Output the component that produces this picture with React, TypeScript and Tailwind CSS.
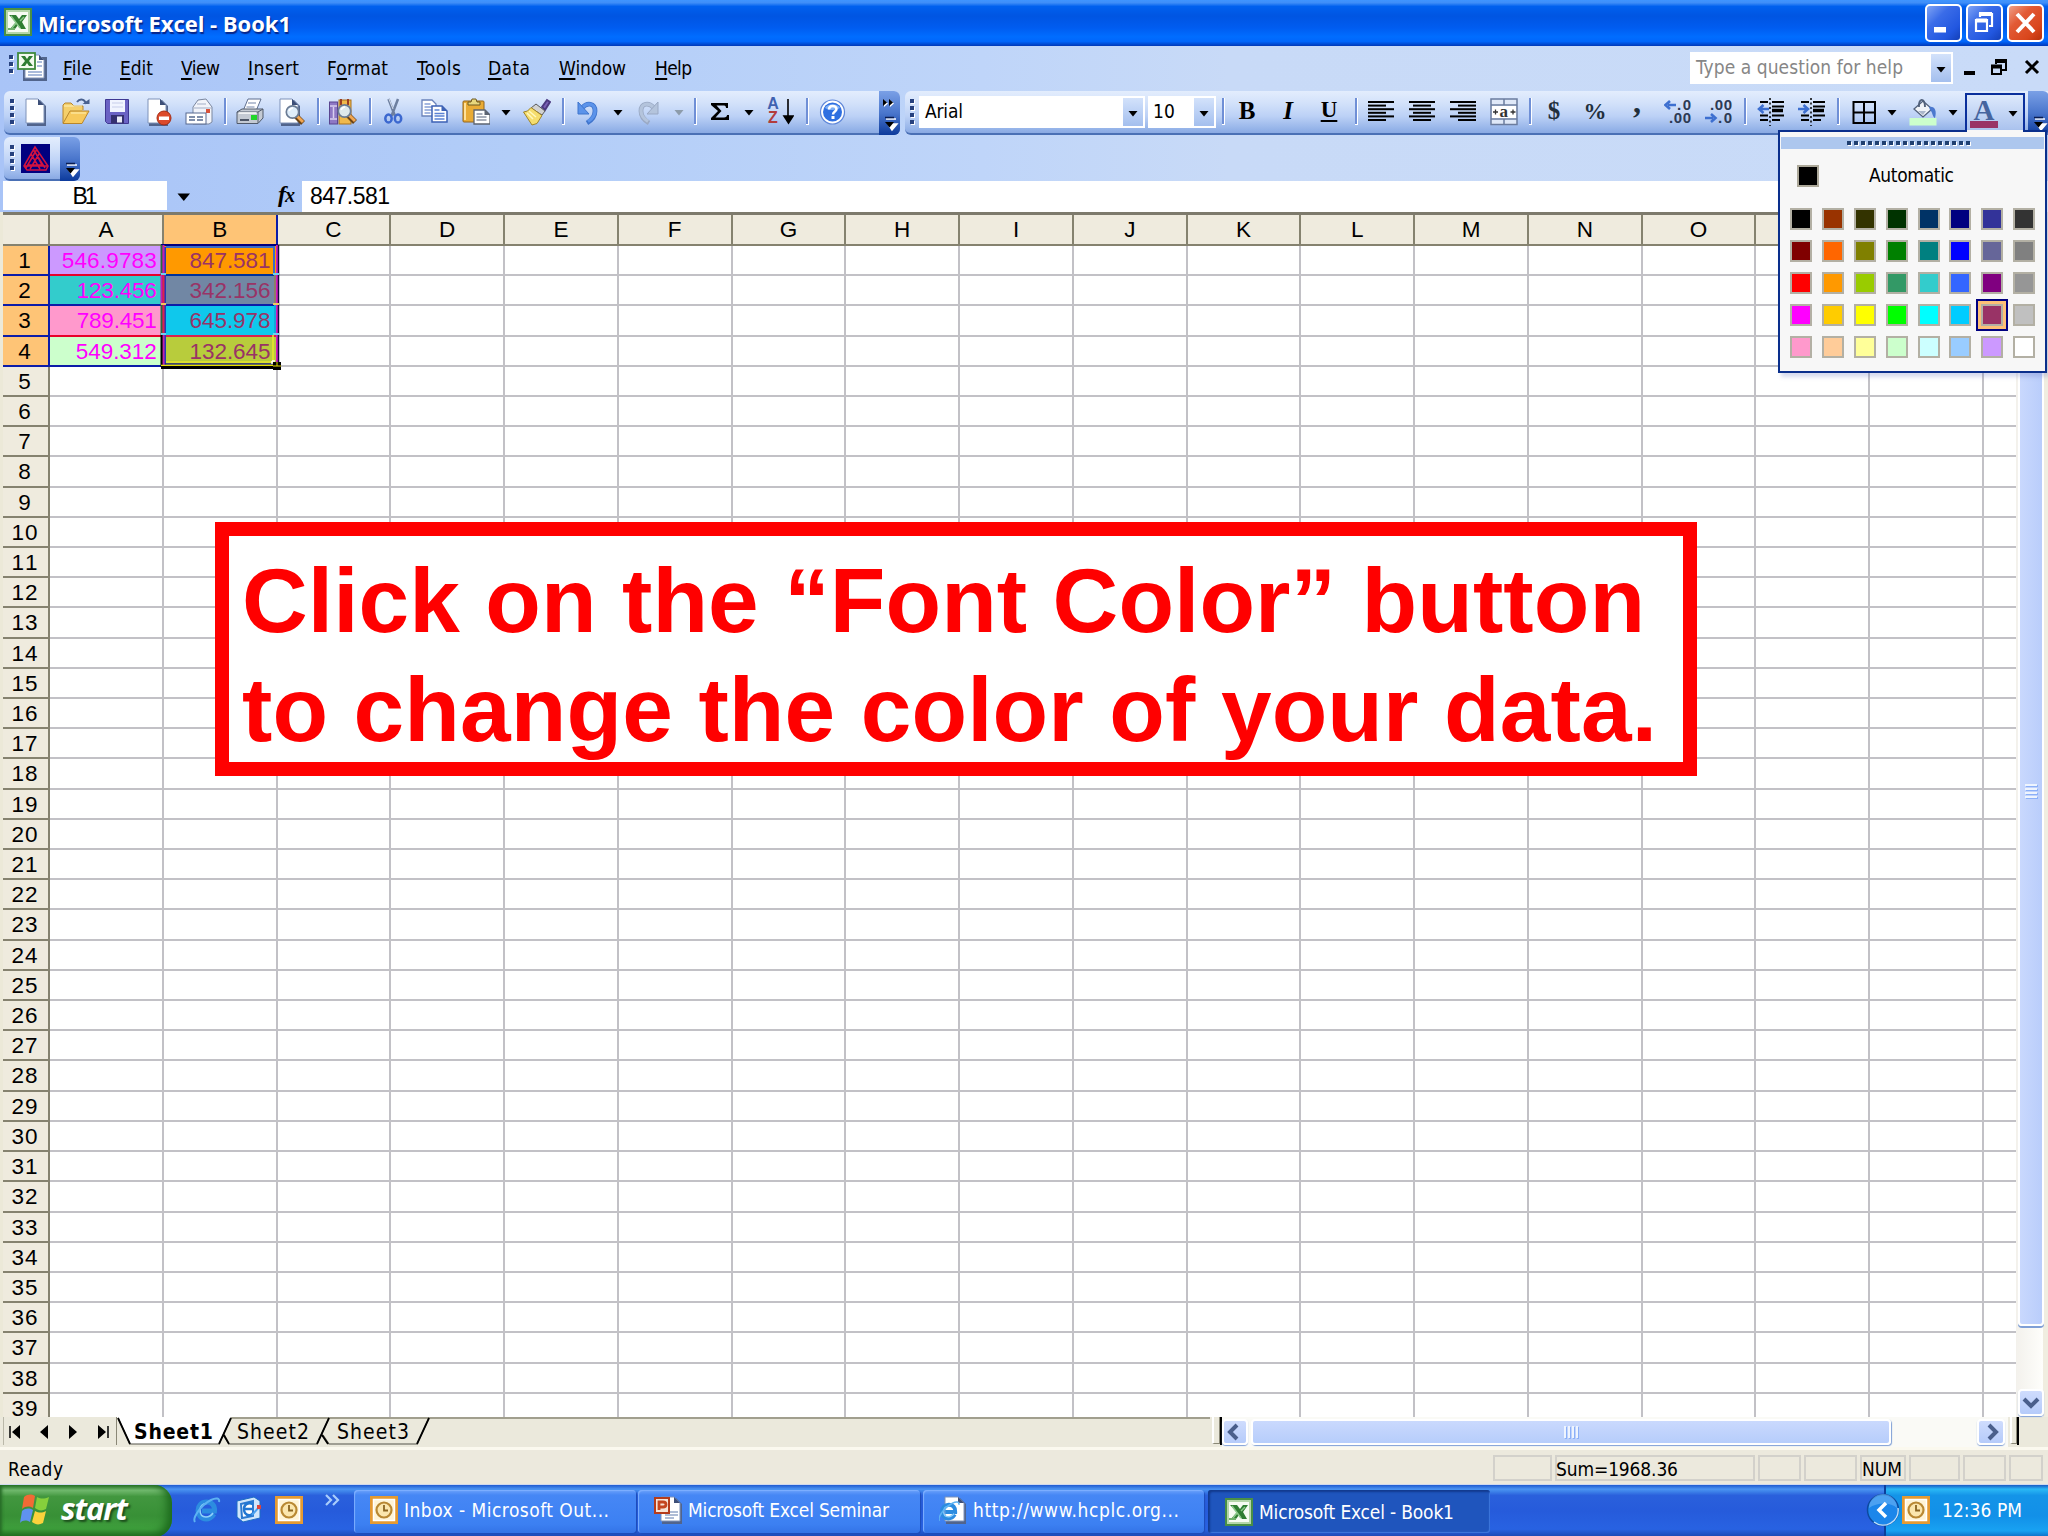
import { useLayoutEffect, useRef, useState } from "react";
import type { ReactNode } from "react";

const ui = "font-['DejaVu_Sans_Condensed','DejaVu_Sans',sans-serif] [font-stretch:condensed]";

// text with its tracking set so that it fills w pixels
const Fit = ({ w, className = "", children }: { w: number; className?: string; children: ReactNode }) => {
  const ref = useRef<HTMLSpanElement>(null);
  const [spacing, setSpacing] = useState(0);

  useLayoutEffect(() => {
    const el = ref.current;
    if (!el) return;
    const count = Math.max(1, (el.textContent || "").length - 1);
    setSpacing((w - el.getBoundingClientRect().width) / count);
  }, [w]);

  return (
    <span className={`block shrink-0 whitespace-pre ${className}`} style={{ width: w }}>
      <span ref={ref} style={{ letterSpacing: spacing }}>{children}</span>
    </span>
  );
};

const Svg = ({ className = "", children }: { className?: string; children: ReactNode }) => (
  <svg viewBox="0 0 28 28" className={`block w-7 h-7 shrink-0 ${className}`}>{children}</svg>
);

const Sep = ({ className = "" }: { className?: string }) => (
  <div className={`w-[3px] h-[27px] shrink-0 bg-[#6f8fd6] border-r border-b border-white ${className}`} />
);

const Arrow = ({ className = "", color = "#000" }: { className?: string; color?: string }) => (
  <svg viewBox="0 0 10 28" className={`block w-[10px] h-7 shrink-0 ${className}`}>
    <path d="M0.5 12h9L5 17.5z" fill={color} />
  </svg>
);

const Grip = ({ className = "", n = 4 }: { className?: string; n?: number }) => (
  <div className={`flex flex-col gap-[3px] w-[5px] shrink-0 ${className}`}>
    {Array.from({ length: n }, (_, i) => (
      <div key={i} className="w-1 h-1 bg-[#27417e] shadow-[1px_1px_0_#fff]" />
    ))}
  </div>
);

const ExcelIcon = ({ className = "" }: { className?: string }) => (
  <Svg className={className}>
    <rect x="1" y="1" width="26" height="26" fill="#f6fbf2" stroke="#4a8f45" strokeWidth="2" />
    <rect x="3" y="3" width="22" height="22" fill="none" stroke="#b5d6aa" strokeWidth="2" />
    <path d="M5 7h7l3 4 3-4h5l-5 7 4 7h-5l-3-4-3 4H6l6-7z" fill="#2f7d32" />
    <path d="M7 8l9 12M20 9l-4 4M8 20l4-5" stroke="#8cc98a" strokeWidth="1.5" />
    <path d="M4 21h7" stroke="#6fb06a" strokeWidth="2" />
  </Svg>
);

const Page = ({ x = 5, y = 1, w = 19, h = 25 }) => (
  <g>
    <path d={`M${x + 1} ${y + 1}h${w - 6}l6 6v${h - 5}h-${w}z`} fill="#51648c" />
    <path d={`M${x} ${y}h${w - 7}l6 6v${h - 7}h-${w - 1}z`} fill="#fff" stroke="#7e92b8" strokeWidth="1" />
    <path d={`M${x + w - 7} ${y}v6h6z`} fill="#3d4f78" />
  </g>
);

const NewIcon = () => <Svg className="ml-[6px]"><Page /></Svg>;

const OpenIcon = () => (
  <Svg className="ml-[13px]">
    <path d="M1 25V7l2-2h6l3 3h9v4" fill="#f4cf6b" stroke="#b8862c" />
    <path d="M1 25.500L8 13h19l-7 12.500z" fill="#f7c95c" stroke="#b8862c" />
    <path d="M2 8h18M9 15h15" stroke="#fff2b8" />
    <path d="M15 4c3-4 8-3 9 2" fill="none" stroke="#49618f" strokeWidth="2" />
    <path d="M20.500 6h7v-5z" fill="#49618f" />
  </Svg>
);

const SaveIcon = () => (
  <Svg className="ml-[14px]">
    <path d="M1.500 1.500h23v24h-21l-2-2z" fill="#6a62c4" stroke="#3f3892" />
    <rect x="6" y="2" width="15" height="12" fill="#f1f4ff" />
    <path d="M8 5h11M8 9h11" stroke="#c7cdea" />
    <rect x="7" y="17" width="13" height="8.500" fill="#34306f" />
    <rect x="13" y="18.500" width="5" height="6" fill="#e9ebf8" />
  </Svg>
);

const PermissionIcon = () => (
  <Svg className="ml-[13px]">
    <Page x={3} />
    <circle cx="19" cy="20" r="7" fill="#dc4a2b" stroke="#a62c14" />
    <rect x="14" y="18.500" width="10" height="3.500" fill="#fff" />
  </Svg>
);

const MailIcon = () => (
  <Svg className="ml-[12px]">
    <path d="M8 9l5-7 8-1 6 8v15l-3 2H8z" fill="#f2f4fa" stroke="#7b879f" />
    <path d="M9 10h18M12 6h9" stroke="#a3aec6" />
    <rect x="21" y="11" width="4" height="4" fill="#d9523a" />
    <rect x="1" y="15" width="20" height="11" fill="#fff" stroke="#56698f" />
    <path d="M4 19h6M4 22h6M12 19h6M12 22h6" stroke="#56698f" strokeWidth="1.500" />
  </Svg>
);

const PrintIcon = () => (
  <Svg className="ml-[9px]">
    <path d="M7 13L12 1h13l-5 12z" fill="#fff" stroke="#5f6f8f" />
    <path d="M12 5h8M10.500 9h8" stroke="#a3aec6" strokeWidth="1.500" />
    <path d="M1 14l5-3h21v9l-5 5.500H1z" fill="#c4cad3" stroke="#505a6b" />
    <path d="M1 14h21l5-3M22 14v11" fill="none" stroke="#505a6b" />
    <path d="M2.500 15h18" stroke="#fff" strokeWidth="1.500" />
    <rect x="15" y="17" width="6" height="5" fill="#22d62a" />
    <path d="M4 22h9" stroke="#4c5566" strokeWidth="2" />
  </Svg>
);

const Lens = () => (
  <g>
    <path d="M18 18l7 7" stroke="#6b4416" strokeWidth="5.500" />
    <path d="M19 18l6 6" stroke="#f0a652" strokeWidth="3" />
    <circle cx="14.500" cy="14" r="6.200" fill="#dcedfb" fillOpacity=".92" stroke="#6b7c94" strokeWidth="1.700" />
    <path d="M11 13c1-2 2-3 4-3" stroke="#fff" strokeWidth="1.500" fill="none" />
  </g>
);

const PreviewIcon = () => <Svg className="ml-[14px]"><Page x={2} /><Lens /></Svg>;

const ResearchIcon = () => (
  <Svg className="ml-[9px]">
    <rect x="0.500" y="4" width="8" height="22" fill="#8e78c4" stroke="#5a4590" />
    <path d="M1 8h7M1 21h7M4.500 9v11" stroke="#d9cff0" strokeWidth="1.500" />
    <rect x="10" y="2" width="12" height="24" fill="#f0b94c" stroke="#a8701c" />
    <path d="M12 1v6M19 1v6" stroke="#9b3d22" strokeWidth="2" />
    <g transform="translate(1 -1)"><Lens /></g>
  </Svg>
);

const CutIcon = () => (
  <Svg className="ml-[7px]">
    <path d="M9.500 1l6.500 17M19 1l-6.500 17" stroke="#6d7f9f" strokeWidth="2.500" fill="none" />
    <path d="M10 1l4 10" stroke="#d6deec" />
    <ellipse cx="9.500" cy="20.500" rx="3.200" ry="4" fill="none" stroke="#3c68cf" strokeWidth="2.500" />
    <ellipse cx="19" cy="20.500" rx="3.200" ry="4" fill="none" stroke="#3c68cf" strokeWidth="2.500" />
  </Svg>
);

const CopyIcon = () => (
  <Svg className="ml-[14px]">
    <path d="M1 2h10l4 4v12H1z" fill="#fff" stroke="#6a83bb" strokeWidth="1.300" />
    <path d="M3.500 6h6M3.500 9h8M3.500 12h8M3.500 15h6" stroke="#86a0d6" strokeWidth="1.300" />
    <path d="M11 8h10l5 5v11H11z" fill="#fff" stroke="#3d62b5" strokeWidth="1.500" />
    <path d="M20.500 8v5H26z" fill="#3d62b5" />
    <path d="M13.500 12h5M13.500 15.500h10M13.500 18h10M13.500 21h10" stroke="#5b82d3" strokeWidth="1.300" />
  </Svg>
);

const PasteIcon = () => (
  <Svg className="ml-[13px]">
    <rect x="1" y="3" width="21" height="21" rx="1" fill="#e9ab35" stroke="#94651a" />
    <path d="M3 5v17" stroke="#ffe19a" strokeWidth="2" />
    <path d="M6 7V4h3l1-3h4l1 3h3v3z" fill="#e8d67c" stroke="#6e5a22" />
    <path d="M12 12h11l5 5v9H12z" fill="#fff" stroke="#5c6472" strokeWidth="1.300" />
    <path d="M22.500 12v5H28z" fill="#5c6472" />
    <path d="M14.500 16h6M14.500 19h10M14.500 22h10" stroke="#8c94a4" strokeWidth="1.300" />
  </Svg>
);

const PainterIcon = () => (
  <Svg className="ml-[12px]">
    <path d="M19 9l5-7 3 2-5 8z" fill="#7860b4" stroke="#4c3a80" strokeWidth="2" />
    <path d="M13 6l9 7-3 4-11-7z" fill="#d2d2d2" stroke="#5a5a5a" />
    <path d="M8 9.500l11 8-5 8-5 1.500L0.500 14l4-1z" fill="#f5dd6e" stroke="#a08427" />
    <path d="M6 13l7 6M4 15l6 6" stroke="#fff7bf" strokeWidth="1.500" />
  </Svg>
);

const Curl = ({ color, dark }: { color: string; dark: string }) => (
  <g>
    <path d="M8 10c5-6 13-5 13 3 0 5-3 9-8 12" fill="none" stroke={dark} strokeWidth="4.800" />
    <path d="M8 10c5-6 13-5 13 3 0 5-3 8-7 10.500" fill="none" stroke={color} strokeWidth="3.200" />
    <path d="M4 4v12h11z" fill={color} stroke={dark} />
  </g>
);

const UndoIcon = () => <Svg className="ml-[9px]"><Curl color="#5b93ea" dark="#3f74cc" /></Svg>;
const RedoIcon = () => (
  <Svg className="ml-[11px]"><g transform="translate(28 0) scale(-1 1)"><Curl color="#b4c4dc" dark="#9aa9c4" /></g></Svg>
);

const SigmaIcon = () => (
  <Svg className="ml-[9px]">
    <path d="M5 5h17v5h-2c0-2-1-2.500-3-2.500h-6.500l5 5.500-6 6.500H18c2 0 3-1 3-2.500h2V22H5v-2l7-7-7-6z" fill="#000" />
  </Svg>
);

const SortIcon = () => (
  <div className="ml-[12px] w-7 h-7 shrink-0 flex">
    <div className="w-[14px] flex flex-col items-center font-['Liberation_Sans'] font-bold text-[16px] leading-[14px] -mt-px">
      <span className="text-[#3f62b0]">A</span>
      <span className="text-[#b23c3c]">Z</span>
    </div>
    <svg viewBox="0 0 14 28" className="block w-[14px] h-7"><path d="M8 1v20M4 18h9l-4.500 7z" stroke="#000" strokeWidth="1.600" /></svg>
  </div>
);

const HelpIcon = () => (
  <Svg className="ml-[10px]">
    <circle cx="13.500" cy="14" r="12" fill="#fff" stroke="#5e86d8" strokeWidth="1.200" />
    <circle cx="13.500" cy="14" r="9.500" fill="#2f6fe0" />
    <path d="M6 10c2-5 13-5 15 0-3 2-11 3-15 0z" fill="#7fb0f5" />
    <path d="M10 11.500c0-5 7.500-4.500 7.500-.5 0 2.500-3.500 2.500-3.500 5.500" fill="none" stroke="#fff" strokeWidth="2.500" />
    <rect x="12.500" y="18" width="3" height="3" fill="#fff" />
  </Svg>
);

const AlignIcon = ({ kind }: { kind: "left" | "center" | "right" }) => (
  <Svg className={kind === "left" ? "ml-[9px]" : "ml-[13px]"}>
    {[26, 18, 26, 18, 26, 18].map((w, i) => {
      const x = kind === "left" ? 1 : kind === "center" ? 14 - w / 2 : 27 - w;
      return <rect key={i} x={x} y={3 + i * 3.6} width={w} height="2" fill="#000" />;
    })}
  </Svg>
);

const MergeIcon = () => (
  <Svg className="ml-[13px]">
    <rect x="1" y="1" width="26" height="25.500" fill="#dfe8f8" stroke="#6b7c9e" strokeWidth="1.500" />
    <path d="M1 7h26M1 21h26M14 1v6M14 21v5" stroke="#6b7c9e" strokeWidth="1.500" />
    <rect x="2" y="8" width="24" height="12" fill="#fff" />
    <path d="M3 14h5M5.500 11.500v5M20.500 14h5M23 11.500v5" stroke="#333" strokeWidth="1.300" />
    <text x="9.500" y="19" fontFamily="Liberation Serif" fontWeight="bold" fontSize="17" fill="#333">a</text>
  </Svg>
);

const DecimalIcon = ({ more, className }: { more?: boolean; className: string }) => (
  <Svg className={className}>
    <g fontFamily="Liberation Sans" fontSize="15" fontWeight="bold" fill="#2c3a54">
      <text x={more ? 13 : 5} y="12" textLength={more ? 14 : 22}>{more ? ".0" : ".00"}</text>
      <text x={more ? 5 : 13} y="24.500" textLength={more ? 22 : 14}>{more ? ".00" : ".0"}</text>
    </g>
    {more ? (
      <path d="M12 7H4M6 3L1.500 7 6 11" fill="none" stroke="#3d6fd0" strokeWidth="2.600" />
    ) : (
      <path d="M0 20h8M6 16l4.500 4L6 24" fill="none" stroke="#3d6fd0" strokeWidth="2.600" />
    )}
  </Svg>
);

const IndentIcon = ({ out, className }: { out?: boolean; className: string }) => (
  <Svg className={className}>
    <path d="M3 4h8M15 4h12M15 8.500h12M15 13h8M3 17.500h8M15 17.500h12M3 22h8M15 22h8" stroke="#000" strokeWidth="2.200" />
    <path d="M15 12.500h11" stroke="#000" strokeWidth="3.500" />
    <path d="M13 0v28" stroke="#000" strokeWidth="1.500" strokeDasharray="2 2.500" />
    {out ? (
      <path d="M12 11H3M6.500 7L2 11l4.500 4" fill="none" stroke="#3d6fd0" strokeWidth="2.500" />
    ) : (
      <path d="M0 11h9M5.500 7l4.500 4-4.500 4" fill="none" stroke="#3d6fd0" strokeWidth="2.500" />
    )}
  </Svg>
);

const BordersIcon = () => (
  <Svg className="ml-[10px]">
    <path d="M3.500 4h21.500v21H3.500zM14 4v21M3.500 14.500h21.500" fill="none" stroke="#000" strokeWidth="2" />
  </Svg>
);

const FillIcon = () => (
  <Svg className="ml-[12px]">
    <path d="M5 11l9-8 9 8-9 8z" fill="#f0f3f8" stroke="#51607a" strokeWidth="1.300" />
    <path d="M10 9c-1-9 6-10 6 0" fill="none" stroke="#51607a" strokeWidth="1.800" />
    <path d="M9 13h8l-3 4z" fill="#aab6ca" />
    <path d="M20 9c6-1 8 4 6 11-3-1-2-6-5-8z" fill="#4b78ce" />
    <rect x="0.500" y="20" width="27" height="7.500" fill="#ccffcc" />
  </Svg>
);

const Glyph = ({ className, children }: { className: string; children: ReactNode }) => (
  <div className={`w-7 h-7 shrink-0 text-center font-['Liberation_Serif',serif] font-bold ${className}`}>{children}</div>
);

const Combo = ({ className, children }: { className: string; children: ReactNode }) => (
  <div className={`bg-white h-8 shrink-0 flex items-center p-[2px] ${className}`}>
    {children}
    <div className="ml-auto w-5 h-7 bg-linear-to-b from-[#d3e2fb] to-[#a4bfee] flex justify-center items-center">
      <Arrow className="mt-px" />
    </div>
  </div>
);

const TitleBar = () => (
  <div className="h-[46px] flex items-center pl-1 pr-1 bg-[linear-gradient(180deg,#3f95ff_0%,#3f8ef8_6%,#0060ee_14%,#0055e2_35%,#005cf0_60%,#006dff_80%,#0066fb_90%,#0038b8_100%)]">
    <ExcelIcon className="mt-[-3px]" />
    <Fit w={253} className="ml-[6px] font-['Open_Sans',sans-serif] font-bold text-[22px] leading-[40px] text-white [text-shadow:1px_2px_1px_#06268a]">
      Microsoft Excel - Book1
    </Fit>
    <div className="ml-auto flex gap-[4px]">
      <WinButton>
        <rect x="9" y="23" width="12" height="5.500" fill="#fff" />
      </WinButton>
      <WinButton>
        <path d="M14 13v-3h12v12h-3M10 16h11v11H10z" fill="none" stroke="#fff" strokeWidth="2.200" />
        <path d="M13 10h13M10 16.500h11" stroke="#fff" strokeWidth="4" />
      </WinButton>
      <WinButton red>
        <path d="M10 10l17 18M27 10L10 28" stroke="#fff" strokeWidth="4" />
      </WinButton>
    </div>
  </div>
);

const WinButton = ({ red, children }: { red?: boolean; children: ReactNode }) => (
  <div className={`w-[37px] h-[38px] rounded-[5px] border-2 border-white overflow-hidden ${red
    ? "bg-[linear-gradient(135deg,#f0a088_0%,#e25a35_35%,#d9461c_75%,#b8300a_100%)]"
    : "bg-[linear-gradient(135deg,#7fa4f5_0%,#3a6ce8_35%,#2257e0_75%,#1440b8_100%)]"}`}>
    <svg viewBox="0 0 37 38" className="block w-[37px] h-[38px] -ml-[2px] -mt-[2px]">{children}</svg>
  </div>
);

const menus = [
  { pre: "", key: "F", post: "ile", w: 29, ml: "ml-[14px]" },
  { pre: "", key: "E", post: "dit", w: 33, ml: "ml-[28px]" },
  { pre: "", key: "V", post: "iew", w: 39, ml: "ml-[28px]" },
  { pre: "", key: "I", post: "nsert", w: 51, ml: "ml-[28px]" },
  { pre: "F", key: "o", post: "rmat", w: 61, ml: "ml-[28px]" },
  { pre: "", key: "T", post: "ools", w: 44, ml: "ml-[29px]" },
  { pre: "", key: "D", post: "ata", w: 42, ml: "ml-[27px]" },
  { pre: "", key: "W", post: "indow", w: 67, ml: "ml-[29px]" },
  { pre: "", key: "H", post: "elp", w: 37, ml: "ml-[29px]" },
];

const MenuBar = () => (
  <div className={`h-[45px] flex items-start pl-[9px] text-black text-[19px] ${ui}`}>
    <Grip className="mt-[9px]" n={3} />
    <svg viewBox="0 0 32 30" className="block w-8 h-[30px] mt-[6px] ml-[3px]">
      <path d="M10 5h20v24H6V12z" fill="#51648c" />
      <path d="M8 3h14l5 5v18H8z" fill="#fff" stroke="#8294b8" />
      <path d="M20 10h5M20 14h5M11 20h14M11 23h14" stroke="#8fa5cf" strokeWidth="1.500" />
      <path d="M22 3v5h5z" fill="#3d4f78" />
      <rect x="1" y="1" width="17" height="16" fill="#f3faef" stroke="#3f8a3c" strokeWidth="1.800" />
      <path d="M4 4h4l2 3 2-3h4l-4 5 4 5h-4l-2-3-2 3H4l4-5z" fill="#2f7d32" />
    </svg>
    {menus.map((m) => (
      <Fit key={m.key + m.post} w={m.w} className={`mt-[8px] leading-[28px] ${m.ml}`}>
        {m.pre}<span className="underline decoration-2 underline-offset-[3px]">{m.key}</span>{m.post}
      </Fit>
    ))}
    <Combo className="ml-auto mt-[6px] w-[263px]">
      <Fit w={207} className="ml-[4px] text-[#868686] leading-[26px] pb-[3px]">Type a question for help</Fit>
    </Combo>
    <svg viewBox="0 0 84 30" className="block w-[84px] h-[30px] mt-[7px] ml-[7px] mr-1">
      <rect x="4" y="18" width="11" height="4" fill="#000" />
      <path d="M36 11V8h10v9h-4M32 13h9v8h-9z" fill="none" stroke="#000" strokeWidth="2" />
      <path d="M35 8h12M31 13.500h11" stroke="#000" strokeWidth="4" />
      <path d="M66 8l12 12M78 8L66 20" stroke="#000" strokeWidth="3" />
    </svg>
  </div>
);

const bar = "bg-[linear-gradient(180deg,#e3edfd_0%,#d2e1fa_30%,#bcd1f6_60%,#93b2e8_92%,#8aa9e2_100%)] border-b-2 border-[#4a70b5]";
const endCap = "bg-[linear-gradient(180deg,#7aa0e6_0%,#4a76cc_50%,#0c3a9c_100%)] rounded-r-[6px]";

const CapArrow = ({ chevrons }: { chevrons?: boolean }) => (
  <svg viewBox="0 0 21 44" className="block w-[21px] h-11">
    {chevrons && (
      <>
        <path d="M5 9l4 3.500-4 3.500zM11 9l4 3.500-4 3.500z" fill="#fff" />
        <path d="M4 8l4 3.500L4 15zM10 8l4 3.500-4 3.500z" fill="#000" />
      </>
    )}
    <path d="M7 28h10M9 33h9l-5 6z" stroke="#fff" strokeWidth="1.500" fill="#fff" />
    <path d="M6 26.500h9" stroke="#0a1c50" strokeWidth="1.500" />
    <path d="M6 31h9l-4.500 5.500z" fill="#000" />
  </svg>
);

const Toolbars = () => (
  <div className="flex h-11 pl-1 gap-[5px] overflow-hidden">
    <div className={`w-[896px] shrink-0 h-11 flex items-start rounded-l-[6px] rounded-r-[6px] ${bar}`}>
      <Grip className="ml-[6px] mt-[8px]" />
      <div className="flex items-start pt-[7px]">
        <NewIcon />
        <OpenIcon />
        <SaveIcon />
        <PermissionIcon />
        <MailIcon />
        <Sep className="ml-[11px]" />
        <PrintIcon />
        <PreviewIcon />
        <Sep className="ml-[11px]" />
        <ResearchIcon />
        <Sep className="ml-[12px]" />
        <CutIcon />
        <CopyIcon />
        <PasteIcon />
        <Arrow className="ml-[11px]" />
        <PainterIcon />
        <Sep className="ml-[11px]" />
        <UndoIcon />
        <Arrow className="ml-[11px]" />
        <RedoIcon />
        <Arrow className="ml-[12px]" color="#8d9cab" />
        <Sep className="ml-[10px]" />
        <SigmaIcon />
        <Arrow className="ml-[10px]" />
        <SortIcon />
        <Sep className="ml-[12px]" />
        <HelpIcon />
      </div>
      <div className={`ml-auto w-[21px] h-11 ${endCap}`}><CapArrow chevrons /></div>
    </div>
    <div className={`w-[1143px] shrink-0 h-11 flex items-start rounded-l-[6px] ${bar}`}>
      <Grip className="ml-[5px] mt-[8px]" />
      <Combo className="ml-[4px] mt-[5px] w-[226px]">
        <Fit w={38} className={`ml-[4px] text-[19px] leading-[24px] pb-[3px] ${ui}`}>Arial</Fit>
      </Combo>
      <Combo className="ml-[3px] mt-[5px] w-[68px]">
        <Fit w={22} className={`ml-[3px] text-[19px] leading-[24px] pb-[3px] ${ui}`}>10</Fit>
      </Combo>
      <div className="flex items-start pt-[7px]">
        <Sep className="ml-[6px]" />
        <Glyph className="ml-[8px] text-[25px] leading-[26px]">B</Glyph>
        <Glyph className="ml-[13px] text-[25px] leading-[26px] italic">I</Glyph>
        <Glyph className="ml-[13px] text-[23px] leading-[24px] underline decoration-2 underline-offset-[3px]">U</Glyph>
        <Sep className="ml-[12px]" />
        <AlignIcon kind="left" />
        <AlignIcon kind="center" />
        <AlignIcon kind="right" />
        <MergeIcon />
        <Sep className="ml-[11px]" />
        <Glyph className="ml-[8px] text-[25px] leading-[26px] text-[#222f3c]">$</Glyph>
        <Glyph className="ml-[13px] text-[23px] leading-[28px] text-[#222f3c]">%</Glyph>
        <Glyph className="ml-[14px] text-[32px] leading-[8px] text-[#222f3c]">,</Glyph>
        <DecimalIcon more className="ml-[13px]" />
        <DecimalIcon className="ml-[13px]" />
        <Sep className="ml-[11px]" />
        <IndentIcon out className="ml-[10px]" />
        <IndentIcon className="ml-[13px]" />
        <Sep className="ml-[11px]" />
        <BordersIcon />
        <Arrow className="ml-[9px]" />
        <FillIcon />
        <Arrow className="ml-[11px]" />
      </div>
      <div className="ml-[7px] mt-[2px] w-[60px] h-[42px] shrink-0 flex items-start pl-[3px] pt-[3px] border-2 border-b-0 border-[#0a2f9c] bg-[linear-gradient(180deg,#dde9fc,#a3bdec)]">
        <div className="w-7 h-[30px] flex flex-col items-center justify-end">
          <span className="font-['Liberation_Serif',serif] font-bold text-[29px] leading-[22px] text-[#46659f]">A</span>
          <div className="w-7 h-[7px] bg-[#993366]" />
        </div>
        <Arrow className="ml-[10px] mt-px" />
      </div>
      <div className={`ml-[3px] w-[21px] h-11 shrink-0 ${endCap}`}><CapArrow /></div>
    </div>
  </div>
);

const PdfToolbar = () => (
  <div className="h-[46px] pl-1 pt-[2px] flex">
    <div className={`w-14 h-11 flex items-start rounded-l-[6px] ${bar}`}>
      <Grip className="ml-[6px] mt-[8px]" />
      <svg viewBox="0 0 29 29" className="block w-[29px] h-[29px] ml-[6px] mt-[7px] shrink-0">
        <rect width="29" height="29" fill="#000080" />
        <path d="M14 3L3 22l3 4h19l2-4zM14 8l-7 13h14zM10 10l9 15M18 10L9 25M12 5l12 19M16 5L5 24M4 22h22" fill="none" stroke="#d3123f" strokeWidth="1.500" />
      </svg>
    </div>
    <div className={`w-5 h-11 ${endCap}`}><CapArrow /></div>
  </div>
);

const FormulaBar = () => (
  <div className="h-[31px] flex pl-[3px] font-['Liberation_Sans',sans-serif] text-[23px] leading-[30px]">
    <div className="w-[164px] h-[29px] bg-white flex justify-center"><Fit w={25}>B1</Fit></div>
    <svg viewBox="0 0 14 29" className="block w-[14px] h-[29px] ml-[10px]"><path d="M0.500 12.500h12.500l-6.200 7.500z" fill="#000" /></svg>
    <div className="ml-[84px] w-[27px] pl-[3px] font-['Liberation_Serif',serif] italic font-bold text-[24px] leading-[26px] tracking-[-1px]">
      f<span className="text-[20px]">x</span>
    </div>
    <div className="grow bg-white pl-[8px]"><Fit w={80}>847.581</Fit></div>
  </div>
);

const columns = ["A", "B", "C", "D", "E", "F", "G", "H", "I", "J", "K", "L", "M", "N", "O", "P", "Q", "R"];

const data = [
  { a: "546.9783", aw: 95, aBg: "bg-[#cc99ff]", aLine: "border-b-[#e8002c]", b: "847.581", bBg: "bg-[#ff9900]", bLine: "border-b-[#003399]" },
  { a: "123.456", aw: 80, aBg: "bg-[#33cccc]", aLine: "border-b-[#0c1ca8]", b: "342.156", bBg: "bg-[#7187a4]", bLine: "border-b-[#0c1ca8]" },
  { a: "789.451", aw: 80, aBg: "bg-[#ff99cc]", aLine: "border-b-[#e8002c]", b: "645.978", bBg: "bg-[#0fc8ec]", bLine: "border-b-[#d82050]" },
  { a: "549.312", aw: 81, aBg: "bg-[#ccffcc]", aLine: "border-b-[#0c1ca8]", b: "132.645", bBg: "bg-[#b8cc3c]", bLine: "border-b-[#000080]" },
];

const Sheet = () => (
  <div className="relative w-[2013px] h-[1205px] overflow-hidden bg-white border-t-[3px] border-[#7d7a6c] font-['Liberation_Sans',sans-serif] text-[22.5px]">
    <div className="flex h-[31px] w-[2140px]">
      <div className="w-[47px] border-r-2 border-b-2 border-[#85826f] bg-[#efebde]" />
      {columns.map((c) => (
        <div key={c} className={`w-[113.78px] border-r-2 border-b-2 text-center leading-[29px] ${c === "B" ? "bg-[#fec476] border-[#85826f] border-r-[#0c1ca8]" : "bg-[#efebde] border-[#85826f]"}`}>
          {c !== "P" && c !== "Q" && c !== "R" && c}
        </div>
      ))}
    </div>
    {Array.from({ length: 39 }, (_, r) => {
      const row = data[r];
      return (
        <div key={r} className="flex h-[30.21px] w-[2140px]">
          <div className={`w-[47px] shrink-0 border-r-2 border-b-2 flex justify-center leading-[29px] pr-[2px] ${row ? "bg-[#fec476] border-[#0c1ca8]" : "bg-[#efebde] border-[#85826f]"}`}>
            <Fit w={r < 9 ? 12.5 : 26}>{String(r + 1)}</Fit>
          </div>
          {columns.map((c) => {
            if (row && c === "A") {
              return (
                <div key={c} className={`w-[113.78px] shrink-0 flex justify-end pr-[5px] leading-[29px] text-[#ff00ff] border-b-2 border-r-2 border-r-[#6a3a70] ${row.aBg} ${row.aLine}`}>
                  <Fit w={row.aw}>{row.a}</Fit>
                </div>
              );
            }
            if (row && c === "B") {
              return (
                <div key={c} className={`w-[113.78px] shrink-0 flex justify-end pr-[5px] leading-[29px] text-[#993366] border-b-2 border-r-2 border-r-[#0c1ca8] ${row.bBg} ${row.bLine}`}>
                  <Fit w={81}>{row.b}</Fit>
                </div>
              );
            }
            return <div key={c} className="w-[113.78px] shrink-0 border-r-2 border-b-2 border-[#c2c1c6]" />;
          })}
        </div>
      );
    })}
    {/* selection frame */}
    <svg viewBox="0 0 124 128" className="absolute left-[157px] top-[28px] w-[124px] h-[128px]">
      <path d="M1 2h117" stroke="#000080" strokeWidth="2" />
      <path d="M5 4v118" stroke="#2438b4" strokeWidth="2" />
      <path d="M1.500 2v30M1.500 62v30" stroke="#2c6a40" strokeWidth="2" />
      <path d="M1.500 32v30M3.500 2v30M3.500 92v32" stroke="#c81cb0" strokeWidth="2" />
      <path d="M3.500 32v60" stroke="#e0204c" strokeWidth="2" />
      <path d="M1.500 92v32" stroke="#000" strokeWidth="2" />
      <path d="M6 4h108v28" fill="none" stroke="#3a6cc8" strokeWidth="2" />
      <path d="M115 32v30" stroke="#8a7f68" strokeWidth="2" />
      <path d="M115 62v30" stroke="#10a8d8" strokeWidth="2" />
      <path d="M117 2v120" stroke="#d01cc0" strokeWidth="2" />
      <path d="M118.500 2v120" stroke="#16083c" strokeWidth="1.500" />
      <path d="M6 119h107V92" fill="none" stroke="#e8e82c" strokeWidth="1.500" />
      <path d="M5 121h109" stroke="#1a1c80" strokeWidth="1.500" />
      <path d="M1 122.500h112" stroke="#e8e000" strokeWidth="1.500" />
      <path d="M1 124.500h112" stroke="#000" strokeWidth="3" />
      <path d="M1 31h5M113 31h6M1 91h5M113 91h6" stroke="#6cd0f0" strokeWidth="2" />
      <path d="M1 61h5M113 61h6" stroke="#f0c860" strokeWidth="2" />
      <path d="M112 118h3M112 118v3" stroke="#fff" strokeWidth="1.500" />
      <rect x="113" y="119" width="8" height="8" fill="#000" />
      <path d="M117 119v4M113 123h8" stroke="#e8e000" strokeWidth="1" />
    </svg>
    <div className="absolute left-[212px] top-[307px] w-[1482px] h-[254px] box-border border-[14px] border-[#ff0000] bg-white pl-[13px] pt-[10px] font-bold text-[91px] leading-[109px] text-[#ff0000]">
      <Fit w={1403}>Click on the “Font Color” button</Fit>
      <Fit w={1415}>to change the color of your data.</Fit>
    </div>
  </div>
);

const scrollBtn = "border-2 border-white rounded-[4px] bg-linear-to-b from-[#cfdcfd] to-[#b5cbfa] shadow-[0_1px_1px_#7f9fd6] shrink-0";

const Chevron = ({ d }: { d: string }) => (
  <svg viewBox="0 0 22 22" className="block w-[22px] h-[22px]"><path d={d} fill="none" stroke="#4a5f8c" strokeWidth="4" /></svg>
);

const VScroll = () => (
  <div className="w-[32px] h-[1205px] shrink-0 flex flex-col items-start pl-[2px] bg-linear-to-r from-[#f3f1ec] to-[#fefefb] border-r-[5px] border-[#f0ede0]">
    <div className="w-[26px] h-[1114px] border-2 border-white rounded-[4px] bg-linear-to-r from-[#c9d8fd] to-[#b9cdfb] shadow-[0_2px_0_#7f9fd6] flex flex-col gap-[2px] pt-[570px] items-center">
      {[0, 1, 2, 3].map((i) => <div key={i} className="w-3 h-[2px] bg-[#eef4fe] shadow-[1px_1px_0_#8cb0f8]" />)}
    </div>
    <div className={`mt-[63px] w-[26px] h-[27px] ${scrollBtn}`}>
      <Chevron d="M4 8l7 7 7-7" />
    </div>
  </div>
);

const SheetTabs = () => (
  <div className="h-[30px] flex pl-[3px] bg-[#ebe9dc]">
    <svg viewBox="0 0 114 30" className="block w-[114px] h-[30px]">
      <path d="M0 0v28M113.500 0v28" stroke="#8a8877" strokeWidth="1" />
      <path d="M7 9v12M105 9v12" stroke="#000" strokeWidth="1.500" />
      <path d="M17 8v14l-8-7zM45 8v14l-8-7zM66 8v14l8-7zM95 8v14l8-7z" fill="#000" />
    </svg>
    <div className={`relative w-[1093px] h-[30px] text-[21px] ${ui}`}>
      <svg viewBox="0 0 1093 30" className="absolute inset-0 w-[1093px] h-[30px]">
        <path d="M0 0h115l-12 27H13z" fill="#fff" />
        <path d="M114 1h979" stroke="#a19f8e" strokeWidth="2" />
        <path d="M1 1l12 26h89l12-26M106 18l6 9h88l12-26M206 18l6 9h88l12-26" fill="none" stroke="#55544a" strokeWidth="1.200" />
        <path d="M1 1l12 26M102 27l12-26M200 27l12-26M300 27l12-26M107 18l5 9M205 18l6 9" fill="none" stroke="#000" strokeWidth="1.800" />
      </svg>
      <div className="relative flex leading-[31px]">
        <Fit w={79} className="ml-[17px] font-bold">Sheet1</Fit>
        <Fit w={72} className="ml-[24px]">Sheet2</Fit>
        <Fit w={72} className="ml-[28px]">Sheet3</Fit>
      </div>
    </div>
    <div className="ml-[2px] w-[8px] h-[27px] bg-[#ebe9dc] border-l-2 border-l-white border-b border-r border-[#8a8877]" />
    <div className="w-[2px] h-[28px] bg-black" />
    <div className="w-[786px] h-[30px] flex pt-[2px] pr-[3px] bg-[#fafaf6]">
      <div className={`w-[26px] h-[26px] ${scrollBtn}`}><Chevron d="M13 4l-7 7 7 7" /></div>
      <div className="ml-[3px] w-[640px] h-[26px] border-2 border-white rounded-[4px] bg-linear-to-b from-[#cad9fd] to-[#b6cdfb] shadow-[1px_1px_1px_#7f9fd6] flex justify-center items-center gap-[2px]">
        {[0, 1, 2, 3].map((i) => <div key={i} className="w-[2px] h-3 bg-[#eef4fe] shadow-[1px_1px_0_#8cb0f8]" />)}
      </div>
      <div className={`ml-auto w-[28px] h-[26px] ${scrollBtn}`}><Chevron d="M10 4l7 7-7 7" /></div>
    </div>
    <div className="ml-[2px] w-[7px] h-[27px] bg-[#ebe9dc] border-l-2 border-l-white border-b border-r border-[#8a8877]" />
    <div className="w-[2px] h-[28px] bg-black" />
  </div>
);

const statusBox = "h-[26px] border-2 border-[#d3d1cb] shrink-0 leading-[25px]";

const StatusBar = () => (
  <div className={`h-[37px] flex items-end pb-[3px] pl-2 pr-[5px] bg-[#ece9dd] border-t-[3px] border-[#fbf9ef] text-[19px] ${ui}`}>
    <Fit w={55} className="leading-[24px]">Ready</Fit>
    <div className="ml-auto flex gap-[3px]">
      <div className={`w-[59px] ${statusBox}`} />
      <div className={`w-[200px] ${statusBox}`}><Fit w={122} className="-ml-px">Sum=1968.36</Fit></div>
      <div className={`w-[43px] ${statusBox}`} />
      <div className={`w-[53px] ${statusBox}`} />
      <div className={`w-[46px] ${statusBox}`}><Fit w={40}>NUM</Fit></div>
      <div className={`w-[51px] ${statusBox}`} />
      <div className={`w-[43px] ${statusBox}`} />
      <div className={`w-[34px] ${statusBox}`} />
    </div>
  </div>
);

const IeIcon = () => (
  <g>
    <path d="M21 18c-2 3-4 5-8 5-5 0-8-4-8-8.500S8.500 6 13.500 6 22 9 21.500 15H9" fill="none" stroke="#2c8ce0" strokeWidth="5" />
    <path d="M20 17c-2 3-4 4-7 4-4 0-6-3-6-7s3-6.500 6.500-6.500" fill="none" stroke="#8fd0fa" strokeWidth="1.500" />
    <path d="M2 26c-3-4 6-17 16-22 5-2.500 9-2 8 2" fill="none" stroke="#5db2f2" strokeWidth="2" />
  </g>
);

const OutlookIcon = ({ className = "" }: { className?: string }) => (
  <Svg className={className}>
    <rect x="1.500" y="1.500" width="25" height="25" fill="#fff4d6" stroke="#e59a32" strokeWidth="3" />
    <rect x="3.500" y="3.500" width="21" height="21" fill="none" stroke="#fff" strokeWidth="1.500" />
    <circle cx="14" cy="14" r="7.500" fill="#fbe6ad" stroke="#b98832" strokeWidth="2.200" />
    <path d="M14 9v5.500h4" fill="none" stroke="#8a6420" strokeWidth="1.800" />
  </Svg>
);

const taskText = `text-[19px] text-white leading-[40px] ${ui}`;
const task = "h-[43px] flex items-center pb-[2px] rounded-[4px] bg-[linear-gradient(180deg,#6ba1fb_0%,#4687f5_12%,#3c80f2_80%,#3373e6_100%)] shadow-[inset_1px_1px_1px_#7fb0ff,1px_1px_1px_#1d4cb8] shrink-0";

const Taskbar = () => (
  <div className="h-[53px] flex items-center border-t border-[#cfd9ee] bg-[linear-gradient(180deg,#1f5ad0_0%,#4b94f2_8%,#3f84ea_12%,#2a60dc_20%,#265bdb_50%,#2862e2_85%,#1b46b0_100%)]">
    <div className="w-[172px] h-[52px] shrink-0 flex items-center rounded-r-[18px] pl-[18px] pb-[3px] bg-[linear-gradient(180deg,#2c7a2c_0%,#73bb70_10%,#42973f_22%,#389036_60%,#3fa03d_85%,#2a7429_100%)] shadow-[inset_-5px_-2px_8px_#1d6a1d,inset_2px_0_3px_#2a6f2a]">
      <svg viewBox="0 0 34 34" className="block w-[34px] h-[34px] shrink-0">
        <path d="M6 4c4-3 7-3 11-1l-2 12c-4-2-7-2-11 1z" fill="#f26a35" />
        <path d="M19 4c4 2 7 2 12 0l-3 12c-4 2-7 2-11-1z" fill="#86cf3c" />
        <path d="M4 18c4-3 7-3 11-1l-3 12c-4-2-7-2-10 1z" fill="#5f92f0" />
        <path d="M17 18c4 2 7 2 11 0l-3 12c-4 2-7 2-11-1z" fill="#fbd23c" />
      </svg>
      <Fit w={67} className="ml-[9px] mb-[3px] font-['Open_Sans',sans-serif] italic font-bold text-[31px] leading-[36px] text-white [text-shadow:2px_2px_2px_#1c4f1c]">start</Fit>
    </div>
    <Svg className="ml-[21px] mb-[2px]"><IeIcon /></Svg>
    <Svg className="ml-[13px] mb-[2px]">
      <path d="M3 5l17-4 6 4v17l-17 4-6-5z" fill="#cfe6fb" stroke="#1d6cc4" />
      <path d="M7 8l12-3v15L8 22z" fill="#fff" stroke="#2c7ad0" strokeWidth="2" />
      <path d="M19 8c-7-3-11 3-8 9 3 4 7 2 8 0M11 13h7" fill="none" stroke="#2177d2" strokeWidth="2.500" />
      <path d="M18 19l8-9" stroke="#49a0ee" strokeWidth="2" />
      <rect x="23" y="9" width="4" height="4" fill="#e0443a" />
    </Svg>
    <OutlookIcon className="ml-[13px] mb-[2px]" />
    <svg viewBox="0 0 16 14" className="block w-4 h-[14px] ml-[22px] mb-[22px] shrink-0">
      <path d="M1 2l5 5-5 5M8 2l5 5-5 5" fill="none" stroke="#a9cdfb" strokeWidth="2.200" />
    </svg>
    <div className={`ml-[13px] w-[282px] pl-4 ${task}`}>
      <OutlookIcon />
      <Fit w={205} className={`ml-[6px] ${taskText}`}>Inbox - Microsoft Out...</Fit>
    </div>
    <div className={`ml-[2px] w-[282px] pl-4 ${task}`}>
      <Svg>
        <Page x={7} y={1} w={20} h={25} />
        <path d="M11 16h13M11 19h13M11 22h9" stroke="#94a6c8" strokeWidth="1.300" />
        <rect x="1" y="2" width="14" height="15" fill="#f7e3d6" stroke="#b53c1c" strokeWidth="2" />
        <path d="M5 14V6h4c4 0 4 5 0 5H6" fill="none" stroke="#c4451f" strokeWidth="2.800" />
      </Svg>
      <Fit w={201} className={`ml-[6px] ${taskText}`}>Microsoft Excel Seminar</Fit>
    </div>
    <div className={`ml-[3px] w-[281px] pl-4 ${task}`}>
      <Svg>
        <Page x={6} y={1} w={20} h={25} />
        <g transform="translate(-1 4) scale(.8)"><IeIcon /></g>
      </Svg>
      <Fit w={206} className={`ml-[6px] ${taskText}`}>http://www.hcplc.org...</Fit>
    </div>
    <div className="ml-[4px] w-[282px] h-[43px] pl-[17px] flex items-center rounded-[3px] bg-[#1f55bd] shadow-[inset_2px_2px_2px_#123a8e,inset_-1px_-1px_1px_#3e78dd] shrink-0">
      <ExcelIcon className="mt-px" />
      <Fit w={195} className={`ml-[6px] mt-px ${taskText}`}>Microsoft Excel - Book1</Fit>
    </div>
    <div className="ml-auto w-[164px] h-[52px] flex items-center border-l-2 border-[#0c3f9c] pb-[2px] bg-[linear-gradient(180deg,#1a5bc4_0%,#2ab8f5_8%,#1494e8_20%,#1290e8_60%,#18a2f2_88%,#0f6cc4_100%)]">
      <svg viewBox="0 0 34 34" className="block w-[34px] h-[34px] -ml-[20px] shrink-0">
        <circle cx="17" cy="17" r="15.500" fill="#1c86ea" stroke="#0c4aa0" strokeWidth="1.500" />
        <path d="M3 15a14 14 0 0 1 28 0c-6-6-20-6-28 0z" fill="#6cb4f5" fillOpacity=".6" />
        <path d="M32 15a15 15 0 0 1-24 14" fill="none" stroke="#bfe0fb" strokeWidth="1.500" />
        <path d="M20 10l-7 7 7 7" fill="none" stroke="#fff" strokeWidth="3.500" />
      </svg>
      <OutlookIcon className="ml-[2px]" />
      <Fit w={80} className={`ml-[12px] ${taskText}`}>12:36 PM</Fit>
    </div>
  </div>
);

const palette = [
  ["#000000", "#993300", "#333300", "#003300", "#003366", "#000080", "#333399", "#333333"],
  ["#800000", "#ff6600", "#808000", "#008000", "#008080", "#0000ff", "#666699", "#808080"],
  ["#ff0000", "#ff9900", "#99cc00", "#339966", "#33cccc", "#3366ff", "#800080", "#969696"],
  ["#ff00ff", "#ffcc00", "#ffff00", "#00ff00", "#00ffff", "#00ccff", "#993366", "#c0c0c0"],
  ["#ff99cc", "#ffcc99", "#ffff99", "#ccffcc", "#ccffff", "#99ccff", "#cc99ff", "#ffffff"],
];

const ColorMenu = () => (
  <div className={`absolute left-[1778px] top-[130px] w-[269px] h-[243px] bg-[#f7f7f7] border-2 border-[#0a2f8c] shadow-[3px_4px_4px_rgba(90,110,190,.25)] ${ui}`}>
    <div className="absolute left-[187px] -top-[2px] w-[56px] h-[2px] bg-[#f7f7f7]" />
    <div className="mt-[5px] mx-px h-[12px] bg-[#adc7ee] flex justify-center items-center gap-[3px] pr-[9px] pb-px">
      {Array.from({ length: 18 }, (_, i) => <div key={i} className="w-1 h-1 bg-[#1f3f70] shadow-[1px_1px_0_#fff]" />)}
    </div>
    <div className="h-[59px] flex items-start pt-[16px] pl-[17px]">
      <div className="w-[22px] h-[22px] bg-black border-2 border-[#aca899]" />
      <Fit w={85} className="ml-[50px] text-[19px] leading-[28px] -mt-[4px]">Automatic</Fit>
    </div>
    <div className="grid grid-cols-8 w-[255px] ml-[5px] -mt-[5px]">
      {palette.flat().map((c) => (
        <div key={c} className={`w-8 h-8 p-[3px] ${c === "#993366" ? "bg-[#fdc077] border-2 border-[#000080]" : "border-2 border-transparent"}`}>
          <div className="w-[22px] h-[22px] border-2 border-[#b3b0a4]" style={{ backgroundColor: c }} />
        </div>
      ))}
    </div>
  </div>
);

const App = () => {
  return (
    <div className="relative w-[2048px] h-[1536px] overflow-hidden bg-[#ece9d8]">
      <TitleBar />
      <div className="bg-[linear-gradient(90deg,#a9c4f7_0%,#b2cdf8_25%,#bfd5f9_48%,#c8daf7_60%,#c9dbf8_100%)]">
        <MenuBar />
        <Toolbars />
        <PdfToolbar />
        <FormulaBar />
      </div>
      <div className="flex pl-[3px]">
        <Sheet />
        <VScroll />
      </div>
      <SheetTabs />
      <StatusBar />
      <Taskbar />
      <ColorMenu />
    </div>
  );
};

export default App;
